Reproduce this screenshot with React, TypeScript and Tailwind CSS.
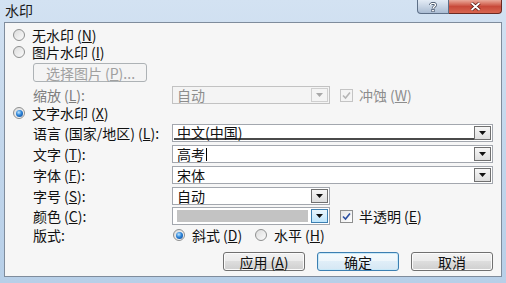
import type { ReactNode } from 'react';

const font = 'font-[Noto_Sans_CJK_SC,sans-serif]';

function Key({ k }: { k: string }) {
    return (
        <span className="ml-[3px]">
            (<span className="underline underline-offset-[1px]">{k}</span>)
        </span>
    );
}

function Radio({ checked, children }: { checked?: boolean; children: ReactNode }) {
    return (
        <div className="flex h-[16px] items-center">
            <span className="flex h-[12px] w-[12px] shrink-0 items-center justify-center rounded-full border border-[#8e8f8f] bg-gradient-to-br from-[#dcdcdc] to-[#fbfbfb]">
                {checked && (
                    <span className="h-[7px] w-[7px] rounded-full bg-[radial-gradient(circle_at_40%_35%,#bfe6ff,#2b83d8_45%,#0d3f86)]" />
                )}
            </span>
            <span className="ml-[7px] leading-none">{children}</span>
        </div>
    );
}

function Check({ checked, disabled, children }: { checked?: boolean; disabled?: boolean; children: ReactNode }) {
    return (
        <div className={`flex h-[16px] items-center ${disabled ? 'text-[#8d8d8d]' : ''}`}>
            <span
                className={`flex h-[13px] w-[13px] shrink-0 items-center justify-center border ${
                    disabled ? 'border-[#c4c4c4] bg-[#f4f4f4]' : 'border-[#8e8f8f] bg-gradient-to-br from-[#e6e6e6] to-white'
                }`}
            >
                {checked && (
                    <svg width="9" height="9" viewBox="0 0 9 9">
                        <path
                            d="M1 4.5 L3.5 7 L8 1.5"
                            fill="none"
                            stroke={disabled ? '#b5b5b5' : '#2a4ea0'}
                            strokeWidth="1.6"
                        />
                    </svg>
                )}
            </span>
            <span className="ml-[6px] leading-none">{children}</span>
        </div>
    );
}

function DropButton({ disabled, hot }: { disabled?: boolean; hot?: boolean }) {
    const box = hot
        ? 'border-[#3c7fb1] bg-gradient-to-b from-[#eaf6fd] to-[#bee6fd]'
        : disabled
          ? 'border-[#cfcfcf] bg-[#f4f4f4]'
          : 'border-[#707070] bg-gradient-to-b from-[#f6f6f6] to-[#dedede]';
    return (
        <span className={`flex h-full w-[17px] shrink-0 items-center justify-center border ${box}`}>
            <svg width="7" height="4" viewBox="0 0 7 4">
                <polygon points="0,0 7,0 3.5,4" fill={disabled ? '#a8a8a8' : '#111'} />
            </svg>
        </span>
    );
}

function Combo({
    width,
    disabled,
    hot,
    underline,
    children,
}: {
    width: string;
    disabled?: boolean;
    hot?: boolean;
    underline?: boolean;
    children?: ReactNode;
}) {
    return (
        <div
            className={`flex h-[18px] ${width} border p-[1px] ${
                disabled ? 'border-[#c2c2c2] bg-[#f4f4f4] text-[#8d8d8d]' : 'border-[#a3a7ae] bg-white'
            }`}
        >
            <div
                className={`flex flex-1 items-center pl-[3px] leading-none ${
                    underline ? 'border-b-2 border-b-[#4a4a4a]' : ''
                }`}
            >
                {children}
            </div>
            <DropButton disabled={disabled} hot={hot} />
        </div>
    );
}

function Field({ label, children }: { label: ReactNode; children: ReactNode }) {
    return (
        <div className="flex h-[18px] items-center">
            <span className="w-[139px] shrink-0 leading-none">{label}</span>
            {children}
        </div>
    );
}

function Button({ def, children }: { def?: boolean; children: ReactNode }) {
    return (
        <div
            className={`flex h-[19px] w-[82px] items-center justify-center rounded-[3px] border leading-none ${
                def
                    ? 'border-[#3c7fb1] bg-[linear-gradient(#f4fafd,#eef6fb_45%,#e0eef8_50%,#d5e7f4)] shadow-[inset_0_0_0_1px_#c8e8f8]'
                    : 'border-[#707070] bg-[linear-gradient(#f2f2f2,#ebebeb_45%,#dddddd_50%,#cfcfcf)] shadow-[inset_0_0_0_1px_#fbfbfb]'
            }`}
        >
            {children}
        </div>
    );
}

export default function App() {
    return (
        <div className={`${font} h-[283px] w-[506px] overflow-hidden bg-gradient-to-b from-[#d3e2f2] via-[#c3d7ec] to-[#b7cfe8] text-[14px] text-[#111]`}>
            <div className="flex h-[22px] items-start justify-between">
                <span className="pl-[5px] pt-[1px] text-[14px] leading-[18px] text-[#1a1a1a]">水印</span>
                <div className="mr-[4px] flex">
                    <div className="flex h-[14px] w-[32px] items-center justify-center rounded-bl-[4px] border border-t-0 border-[#5d6f87] bg-gradient-to-b from-[#e3ebf5] via-[#c7d4e4] to-[#aabcd3]">
                        <svg width="8" height="10" viewBox="0 0 8 10">
                            <path
                                d="M1.5 3 C1.5 0.8 6.5 0.8 6.5 3 C6.5 4.6 4 4.6 4 6.5"
                                fill="none"
                                stroke="#2a3a52"
                                strokeWidth="2.6"
                            />
                            <path
                                d="M1.5 3 C1.5 0.8 6.5 0.8 6.5 3 C6.5 4.6 4 4.6 4 6.5"
                                fill="none"
                                stroke="#fff"
                                strokeWidth="1.4"
                            />
                            <rect x="2.8" y="7.6" width="2.4" height="2.2" fill="#fff" stroke="#2a3a52" strokeWidth="0.6" />
                        </svg>
                    </div>
                    <div className="flex h-[14px] w-[53px] items-center justify-center rounded-br-[4px] border border-l-0 border-t-0 border-[#6b2a22] bg-gradient-to-b from-[#e9a99b] via-[#c8493a] to-[#d8654f]">
                        <svg width="11" height="9" viewBox="0 0 11 9">
                            <path d="M1.5 1 L9.5 8 M9.5 1 L1.5 8" stroke="#4a0f08" strokeWidth="3.2" />
                            <path d="M1.5 1 L9.5 8 M9.5 1 L1.5 8" stroke="#fff" strokeWidth="1.8" />
                        </svg>
                    </div>
                </div>
            </div>

            <div className="ml-[4px] h-[255px] w-[498px] border border-[#7f8c9c] bg-[#f6f6f6] pl-[8px] pr-[8px] pt-[4px]">
                <Radio>
                    无水印<Key k="N" />
                </Radio>
                <div className="mt-[1px]">
                    <Radio>
                        图片水印<Key k="I" />
                    </Radio>
                </div>

                <div className="ml-[20px] mt-[3px] flex h-[19px] w-[114px] items-center rounded-[3px] border border-[#adb2b5] bg-[#f4f4f4] pl-[12px] leading-none text-[#a0a0a0]">
                    选择图片<Key k="P" />...
                </div>

                <div className="ml-[20px] mt-[4px] flex items-center text-[#7d7d7d]">
                    <Field
                        label={
                            <>
                                缩放<Key k="L" />:
                            </>
                        }
                    >
                        <Combo width="w-[158px]" disabled>
                            自动
                        </Combo>
                    </Field>
                    <div className="ml-[10px]">
                        <Check checked disabled>
                            冲蚀<Key k="W" />
                        </Check>
                    </div>
                </div>

                <div className="mt-[1px]">
                    <Radio checked>
                        文字水印<Key k="X" />
                    </Radio>
                </div>

                <div className="ml-[20px] mt-[3px] flex flex-col gap-[3px]">
                    <Field
                        label={
                            <>
                                语言 (国家/地区)<Key k="L" />:
                            </>
                        }
                    >
                        <Combo width="w-[323px]" underline>
                            中文(中国)
                        </Combo>
                    </Field>
                    <Field
                        label={
                            <>
                                文字<Key k="T" />:
                            </>
                        }
                    >
                        <Combo width="w-[323px]">
                            高考<span className="ml-[1px] h-[13px] w-[1px] bg-black" />
                        </Combo>
                    </Field>
                    <Field
                        label={
                            <>
                                字体<Key k="F" />:
                            </>
                        }
                    >
                        <Combo width="w-[323px]">宋体</Combo>
                    </Field>
                    <Field
                        label={
                            <>
                                字号<Key k="S" />:
                            </>
                        }
                    >
                        <Combo width="w-[158px]">自动</Combo>
                    </Field>
                </div>

                <div className="ml-[20px] mt-[2px] flex items-center">
                    <Field
                        label={
                            <>
                                颜色<Key k="C" />:
                            </>
                        }
                    >
                        <Combo width="w-[158px]" hot>
                            <span className="mr-[3px] h-[12px] flex-1 bg-[#c3c3c3]" />
                        </Combo>
                    </Field>
                    <div className="ml-[10px]">
                        <Check checked>
                            半透明<Key k="E" />
                        </Check>
                    </div>
                </div>

                <div className="ml-[20px] mt-[2px] flex h-[16px] items-center">
                    <span className="w-[140px] shrink-0 leading-none">版式:</span>
                    <div className="w-[82px]">
                        <Radio checked>
                            斜式<Key k="D" />
                        </Radio>
                    </div>
                    <Radio>
                        水平<Key k="H" />
                    </Radio>
                </div>

                <div className="mt-[9px] flex justify-end gap-[12px]">
                    <Button>
                        应用<Key k="A" />
                    </Button>
                    <Button def>确定</Button>
                    <Button>取消</Button>
                </div>
            </div>
        </div>
    );
}
